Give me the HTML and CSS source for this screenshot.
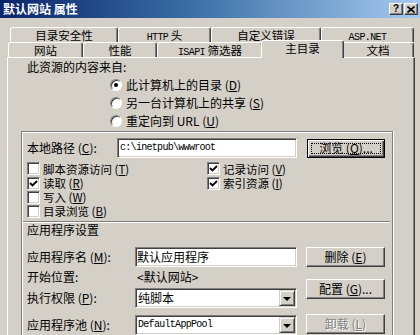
FILE: index.html
```html
<!DOCTYPE html>
<html>
<head>
<meta charset="utf-8">
<link rel="stylesheet" href="styles.css">
</head>
<body>
<div class="win">
  <div class="titlebar">
    <span class="title">默认网站 属性</span>
    <div class="tbtns">
      <span class="tbtn q">?</span>
      <span class="tbtn"><svg width="8" height="7" viewBox="0 0 8 7"><path d="M0.5 0.5 L7.5 6.5 M7.5 0.5 L0.5 6.5" stroke="#000" stroke-width="1.6"/></svg></span>
    </div>
  </div>
  <div class="tabs">
    <div class="tabrow r1">
      <div class="tab w108">目录安全性</div>
      <div class="tab w93"><span class="lat">HTTP</span> 头</div>
      <div class="tab w110">自定义错误</div>
      <div class="tab w93"><span class="lat">ASP.NET</span></div>
    </div>
    <div class="tabrow r2">
      <div class="tab w75">网站</div>
      <div class="tab w74">性能</div>
      <div class="tab w106"><span class="lat">ISAPI</span> 筛选器</div>
      <div class="tab sel">主目录</div>
      <div class="tab w72">文档</div>
    </div>
  </div>
  <div class="panel">
    <div class="srclabel">此资源的内容来自:</div>
    <div class="radios">
      <div class="radio"><span class="rb on"></span>此计算机上的目录 (<u>D</u>)</div>
      <div class="radio"><span class="rb"></span>另一台计算机上的共享 (<u>S</u>)</div>
      <div class="radio"><span class="rb"></span>重定向到 URL (<u>U</u>)</div>
    </div>
    <div class="frame">
      <div class="pathrow">
        <span class="lp">本地路径 (<u>C</u>):</span>
        <div class="edit ep"><span class="mono">c:\inetpub\wwwroot</span></div>
        <div class="btn def">浏览 (<u>O</u>)...</div>
      </div>
      <div class="checks">
        <div class="ccol c1">
          <div class="chk"><span class="cb"></span><span class="ct">脚本资源访问 (<u>T</u>)</span></div>
          <div class="chk"><span class="cb"><svg width="9" height="9" viewBox="0 0 9 9"><path d="M1 4 L3.5 6.5 L8 2" fill="none" stroke="#000" stroke-width="1.8"/></svg></span><span class="ct">读取 (<u>R</u>)</span></div>
          <div class="chk"><span class="cb"></span><span class="ct">写入 (<u>W</u>)</span></div>
          <div class="chk"><span class="cb"></span><span class="ct">目录浏览 (<u>B</u>)</span></div>
        </div>
        <div class="ccol">
          <div class="chk"><span class="cb"><svg width="9" height="9" viewBox="0 0 9 9"><path d="M1 4 L3.5 6.5 L8 2" fill="none" stroke="#000" stroke-width="1.8"/></svg></span><span class="ct">记录访问 (<u>V</u>)</span></div>
          <div class="chk"><span class="cb"><svg width="9" height="9" viewBox="0 0 9 9"><path d="M1 4 L3.5 6.5 L8 2" fill="none" stroke="#000" stroke-width="1.8"/></svg></span><span class="ct">索引资源 (<u>I</u>)</span></div>
        </div>
      </div>
      <div class="sep"></div>
      <div class="apptitle">应用程序设置</div>
      <div class="app">
        <div class="appleft">
          <div class="arow rname"><span class="albl">应用程序名 (<u>M</u>):</span><div class="edit ea">默认应用程序</div></div>
          <div class="arow rstart"><span class="albl">开始位置:</span><span class="val">&lt;默认网站&gt;</span></div>
          <div class="arow rexec"><span class="albl">执行权限 (<u>P</u>):</span><div class="edit combo">纯脚本<span class="arrow"></span></div></div>
          <div class="arow rpool"><span class="albl">应用程序池 (<u>N</u>):</span><div class="edit combo"><span class="mono">DefaultAppPool</span><span class="arrow"></span></div></div>
        </div>
        <div class="appbtns">
          <div class="btn b1">删除 (<u>E</u>)</div>
          <div class="btn b2">配置 (<u>G</u>)...</div>
          <div class="btn b3 dis">卸载 (<u>L</u>)</div>
        </div>
      </div>
    </div>
  </div>
</div>
</body>
</html>
```

FILE: styles.css
```css
* { box-sizing: border-box; margin: 0; padding: 0; }
html, body { width: 420px; height: 335px; overflow: hidden; }
body {
  background: #d4d0c8;
  font-family: "Noto Sans CJK SC", "Noto Sans", sans-serif;
  font-size: 12px;
  line-height: 14px;
  color: #000;
}
u { text-decoration: underline; text-underline-offset: 1px; }
.win { width: 420px; height: 335px; overflow: hidden; }

.titlebar {
  height: 18px;
  background: linear-gradient(90deg, #0a246a 0%, #3a6ea5 45%, #a6caf0 100%);
  display: flex;
  align-items: center;
  justify-content: space-between;
  padding: 0 2px 0 3px;
}
.title { color: #fff; font-weight: bold; font-size: 12px; line-height: 14px; }
.tbtns { display: flex; gap: 1px; }
.tbtn {
  width: 14px; height: 12px;
  background: #d4d0c8;
  border: 1px solid;
  border-color: #fff #404040 #404040 #fff;
  box-shadow: inset -1px -1px #808080;
  display: flex; align-items: center; justify-content: center;
}
.tbtn.q { font-family: "Liberation Sans", sans-serif; font-weight: bold; font-size: 10px; line-height: 10px; }

.tabs { margin-top: 9px; }
.tabrow { display: flex; height: 15px; }
.r1 { margin-left: 10px; }
.r2 { margin-left: 8px; align-items: flex-end; }
.tab {
  height: 15px;
  background: #d4d0c8;
  border: 1px solid;
  border-bottom: none;
  border-color: #fff #404040 transparent #fff;
  border-radius: 3px 3px 0 0;
  box-shadow: inset -1px 0 #808080;
  text-align: center;
  line-height: 14px;
  font-size: 11.5px;
  white-space: nowrap;
}
.r2 .tab { line-height: 15px; }
.w108 { width: 108px; }
.w93 { width: 93px; }
.w110 { width: 110px; }
.w75 { width: 75px; }
.w74 { width: 74px; }
.w106 { width: 106px; }
.w72 { width: 72px; }
.r2 .tab.sel {
  width: 83px;
  height: 18px;
  margin: 0 -2px -1px;
  position: relative;
  z-index: 2;
  line-height: 14px;
}
.lat {
  font-family: "Liberation Mono", monospace;
  font-size: 10px;
  letter-spacing: -0.6px;
}

.panel {
  margin-left: 7px;
  width: 408px;
  height: 290px;
  border: 1px solid;
  border-color: #fff #404040 transparent #fff;
  box-shadow: inset -1px 0 #808080;
  padding: 1px 0 0 13px;
}
.srclabel { margin-left: 6px; height: 16px; line-height: 16px; }
.radios { margin-left: 89px; margin-top: 1px; }
.radio { height: 18px; display: flex; align-items: center; white-space: nowrap; }
.rb {
  width: 12px; height: 12px;
  border-radius: 50%;
  border: 1px solid;
  border-color: #808080 #fff #fff #808080;
  background: #fff;
  box-shadow: inset 1px 1px #404040;
  margin-right: 4px;
  position: relative;
  flex: none;
}
.rb.on::after {
  content: "";
  position: absolute;
  left: 3px; top: 3px;
  width: 4px; height: 4px;
  border-radius: 50%;
  background: #000;
}

.frame {
  margin-top: 1px;
  width: 372px;
  height: 230px;
  border: 1px solid #808080;
  border-bottom: none;
  box-shadow: inset 1px 1px #fff, 1px 0 #fff;
  padding-left: 5px;
}
.pathrow { display: flex; align-items: center; margin-top: 6px; height: 20px; }
.lp { width: 90px; white-space: nowrap; }
.edit {
  background: #fff;
  border: 1px solid;
  border-color: #808080 #fff #fff #808080;
  box-shadow: inset 1px 1px #404040, inset -1px -1px #d4d0c8;
  padding: 0 2px;
  display: flex;
  align-items: center;
  height: 20px;
  white-space: nowrap;
}
.ep { width: 180px; }
.mono {
  font-family: "Liberation Mono", monospace;
  font-size: 10px;
  letter-spacing: -0.7px;
}
.btn {
  width: 79px; height: 20px;
  background: #d4d0c8;
  border: 1px solid;
  border-color: #fff #404040 #404040 #fff;
  box-shadow: inset -1px -1px #808080;
  display: flex; align-items: center; justify-content: center;
  white-space: nowrap;
  flex: none;
}
.btn.def {
  width: 78px; height: 19px;
  margin-left: 10px;
  border: 1px solid #000;
  box-shadow: inset 1px 1px #fff, inset -1px -1px #404040, inset -2px -2px #808080;
  position: relative;
}
.btn.def::after {
  content: "";
  position: absolute;
  left: 3px; top: 3px; right: 3px; bottom: 3px;
  border: 1px dotted #000;
}

.checks { display: flex; margin-top: 3px; }
.c1 { width: 180px; }
.chk { height: 14px; display: flex; align-items: center; white-space: nowrap; }
.chk:first-child { height: 15px; }
.ct { font-size: 11.5px; line-height: 12px; }
.cb {
  width: 13px; height: 13px;
  background: #fff;
  border: 1px solid;
  border-color: #808080 #fff #fff #808080;
  box-shadow: inset 1px 1px #404040, inset -1px -1px #d4d0c8;
  margin-right: 3px;
  display: flex; align-items: center; justify-content: center;
  flex: none;
}
.cb svg { display: block; }

.sep {
  height: 2px;
  border-top: 1px solid #808080;
  border-bottom: 1px solid #fff;
  margin: 3px 2px 0 -4px;
}
.apptitle { height: 14px; line-height: 14px; }
.app { display: flex; margin-top: 10px; }
.appleft { width: 270px; }
.arow { display: flex; align-items: center; white-space: nowrap; }
.albl { width: 108px; flex: none; }
.rname { height: 20px; }
.rstart { height: 14px; margin-top: 3px; }
.rexec { height: 20px; margin-top: 4px; }
.rpool { height: 20px; margin-top: 7px; }
.ea { width: 162px; padding-left: 1px; }
.val { padding-left: 2px; }
.combo { width: 162px; padding: 0 1px 0 2px; }
.arrow {
  margin-left: auto;
  width: 16px; height: 16px;
  background: #d4d0c8;
  border: 1px solid;
  border-color: #d4d0c8 #404040 #404040 #d4d0c8;
  box-shadow: inset 1px 1px #fff, inset -1px -1px #808080;
  display: flex; align-items: center; justify-content: center;
  flex: none;
}
.arrow::after {
  content: "";
  border-left: 4px solid transparent;
  border-right: 4px solid transparent;
  border-top: 4px solid #000;
  margin-top: 1px;
}
.appbtns { margin-left: 9px; display: flex; flex-direction: column; }
.b2 { margin-top: 12px; }
.b3 { margin-top: 15px; }
.dis { color: #808080; text-shadow: 1px 1px #fff; }
```
